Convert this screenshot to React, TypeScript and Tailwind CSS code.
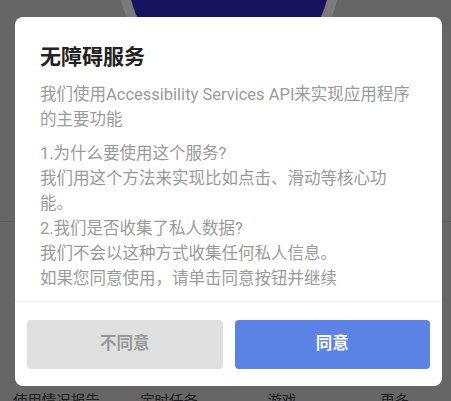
import React from 'react';

const font = { fontFamily: 'Roboto, "Noto Sans CJK SC", sans-serif' };

const tabs = ['使用情况报告', '定时任务', '游戏', '更多'];

const ConsentDialog: React.FC = () => {
  return (
    <div className="absolute left-[15px] top-[17px] w-[427px] bg-white rounded-[8px] overflow-hidden">
      <div className="pl-[25px] pr-[25px] pt-[26px] pb-[10px]">
        <h2 className="text-[21px] leading-[28px] font-bold text-[#222]">无障碍服务</h2>
        <p className="mt-[11px] text-[16.5px] leading-[25px] text-[#9a9a9a]">
          我们使用Accessibility Services API来实现应用程序的主要功能
        </p>
        <p className="mt-[9px] text-[16.5px] leading-[25px] text-[#9a9a9a]">
          1.为什么要使用这个服务?
          <br />
          我们用这个方法来实现比如点击、滑动等核心功能。
          <br />
          2.我们是否收集了私人数据?
          <br />
          我们不会以这种方式收集任何私人信息。
          <br />
          如果您同意使用，请单击同意按钮并继续
        </p>
      </div>
      <div className="border-t border-[#eeeeee] px-[12px] pt-[18px] pb-[17px] grid grid-cols-2 gap-[12px]">
        <button className="h-[49px] rounded-[4px] bg-[#e0e0e0] text-[#999] text-[16.5px] font-bold">
          不同意
        </button>
        <button className="h-[49px] rounded-[4px] bg-[#5a83e5] text-white text-[16.5px] font-bold">
          同意
        </button>
      </div>
    </div>
  );
};

export default function App() {
  return (
    <div className="relative w-[451px] h-[401px] overflow-hidden bg-[#666666]" style={font}>
      {/* page behind the dim overlay */}
      <div className="h-[222px] border-b border-[#5a5a5a]">
        <svg width="451" height="222" viewBox="0 0 451 222">
          <circle cx="229" cy="-25" r="111" fill="#7a7a7a" />
          <circle cx="229" cy="-25" r="101" fill="#16135e" />
        </svg>
      </div>
      <div className="pt-[170px] grid grid-cols-4 text-[14.5px] leading-[20px] text-[#1f1f1f]">
        {tabs.map((t) => (
          <div key={t} className="text-center">
            {t}
          </div>
        ))}
      </div>

      <ConsentDialog />
    </div>
  );
}
